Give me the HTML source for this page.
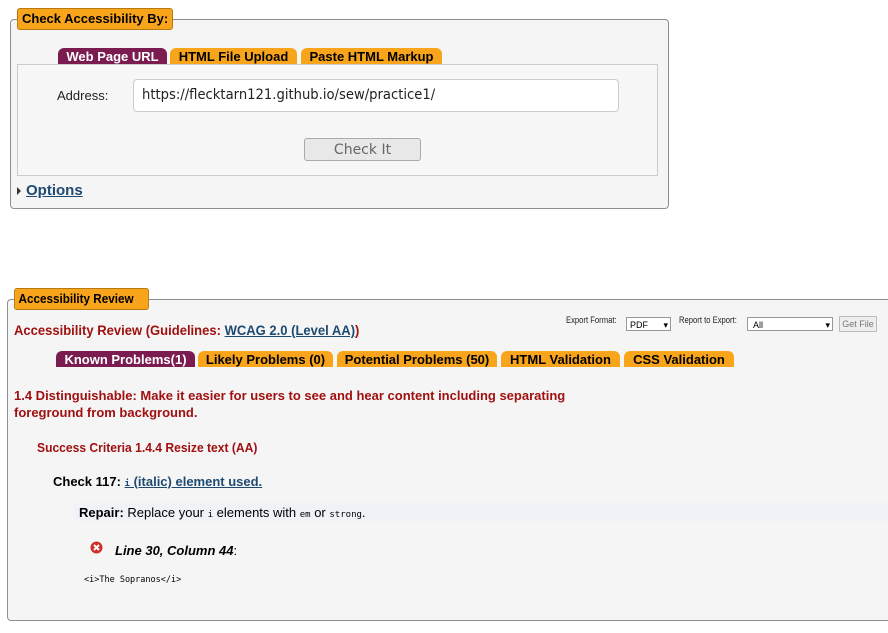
<!DOCTYPE html>
<html><head><meta charset="utf-8"><style>
body{margin:0;width:888px;height:633px;background:#fff;font-family:"Liberation Sans",sans-serif;position:relative;overflow:hidden}
.a{position:absolute;white-space:nowrap}
.s{transform-origin:0 0;transform:scaleX(.9)}
.leg{position:absolute;background:#f9a51b;border:1px solid #b77a10;border-radius:3px;font-weight:bold;font-size:13px;color:#000;padding:0 4px;line-height:20px}
.tab{position:absolute;height:16px;background:#f9a51b;border-radius:6px 6px 0 0;font-weight:bold;font-size:13px;line-height:17px;text-align:center;color:#000}
.tab.on{background:#7b1c50;color:#fff}
.red{color:#a01010;font-weight:bold}
a{color:#1e4a72;text-decoration:underline}
code{font-family:"DejaVu Sans Mono",monospace;font-size:9px}
</style></head><body>
<div class="a" style="left:10px;top:19px;width:657px;height:188px;border:1px solid #8a8f96;border-radius:4px;background:#f5f5f5"></div>
<div class="leg" style="left:17px;top:8px;height:20px">Check Accessibility By:</div>
<div class="a" style="left:17px;top:64px;width:639px;height:110px;border:1px solid #ccc;background:#f7f7f7"></div>
<div class="tab on" style="left:58px;top:48px;width:109px">Web Page URL</div>
<div class="tab" style="left:170px;top:48px;width:127px">HTML File Upload</div>
<div class="tab" style="left:301px;top:48px;width:141px">Paste HTML Markup</div>
<div class="a" style="left:57px;top:88px;font-size:13px;color:#222">Address:</div>
<div class="a" style="left:133px;top:79px;width:484px;height:31px;border:1px solid #ccc;border-radius:4px;background:#fff"></div>
<div class="a" style="left:142px;top:87px;font-size:14px;color:#222;font-family:'DejaVu Sans',sans-serif;transform-origin:0 0;transform:scaleX(.94)">https://flecktarn121.github.io/sew/practice1/</div>
<div class="a" style="left:304px;top:138px;width:115px;height:21px;border:1px solid #aaa;border-radius:3px;background:#e8e8e8;text-align:center;font-size:14px;line-height:23px;color:#666;font-family:'DejaVu Sans',sans-serif">Check It</div>
<div class="a" style="left:17px;top:187px;width:0;height:0;border-left:4px solid #333;border-top:4px solid transparent;border-bottom:4px solid transparent"></div>
<div class="a" style="left:26px;top:182px;font-size:15px;font-weight:bold"><a>Options</a></div>

<div class="a" style="left:7px;top:299px;width:890px;height:320px;border:1px solid #8a8f96;border-radius:4px;background:#f5f5f5"></div>
<div class="leg s" style="left:14px;top:288px;height:20px;width:140px">Accessibility Review</div>
<div class="a red" style="left:14px;top:322px;font-size:14px;transform-origin:0 0;transform:scaleX(.93)">Accessibility Review (Guidelines: <a>WCAG 2.0 (Level AA)</a>)</div>
<div class="a" style="left:566px;top:315px;font-size:9px;color:#222;transform:scaleX(.85);transform-origin:0 0">Export Format:</div>
<div class="a" style="left:626px;top:317px;width:45px;height:14px;border:1px solid #999;background:#fff;font-size:9px;line-height:14px;padding-left:3px;box-sizing:border-box">PDF<span style="position:absolute;right:2px;top:0">▾</span></div>
<div class="a" style="left:679px;top:315px;font-size:9px;color:#222;transform:scaleX(.85);transform-origin:0 0">Report to Export:</div>
<div class="a" style="left:747px;top:317px;width:86px;height:14px;border:1px solid #999;background:#fff;font-size:9px;line-height:14px;padding-left:5px;box-sizing:border-box">All<span style="position:absolute;right:2px;top:0">▾</span></div>
<div class="a" style="left:839px;top:316px;width:36px;height:14px;border:1px solid #bbb;background:#eee;font-size:9px;line-height:14px;text-align:center;color:#777">Get File</div>
<div class="tab on" style="left:56px;top:351px;width:139px">Known Problems(1)</div>
<div class="tab" style="left:198px;top:351px;width:135px">Likely Problems (0)</div>
<div class="tab" style="left:337px;top:351px;width:160px">Potential Problems (50)</div>
<div class="tab" style="left:501px;top:351px;width:119px">HTML Validation</div>
<div class="tab" style="left:624px;top:351px;width:110px">CSS Validation</div>
<div class="a red" style="left:14px;top:387px;font-size:13px;line-height:17px">1.4 Distinguishable: Make it easier for users to see and hear content including separating<br>foreground from background.</div>
<div class="a red" style="left:37px;top:440px;font-size:13px;transform-origin:0 0;transform:scaleX(.93)">Success Criteria 1.4.4 Resize text (AA)</div>
<div class="a" style="left:53px;top:474px;font-size:13px;font-weight:bold">Check 117: <a><code>i</code> (italic) element used.</a></div>
<div class="a" style="left:74px;top:503px;width:820px;height:18px;background:#f0f2f8"></div>
<div class="a" style="left:79px;top:505px;font-size:13px"><b>Repair:</b> Replace your <code>i</code> elements with <code>em</code> or <code>strong</code>.</div>
<svg class="a" style="left:90px;top:541px" width="13" height="13" viewBox="0 0 13 13"><circle cx="6.5" cy="6.5" r="6" fill="#d0302a"/><path d="M4 4l5 5M9 4l-5 5" stroke="#fff" stroke-width="2"/></svg>
<div class="a" style="left:115px;top:543px;font-size:13px;font-weight:bold;font-style:italic">Line 30, Column 44<span style="font-weight:normal;font-style:normal">:</span></div>
<div class="a" style="left:84px;top:569px"><code style="font-size:8.5px">&lt;i&gt;The Sopranos&lt;/i&gt;</code></div>
</body></html>
